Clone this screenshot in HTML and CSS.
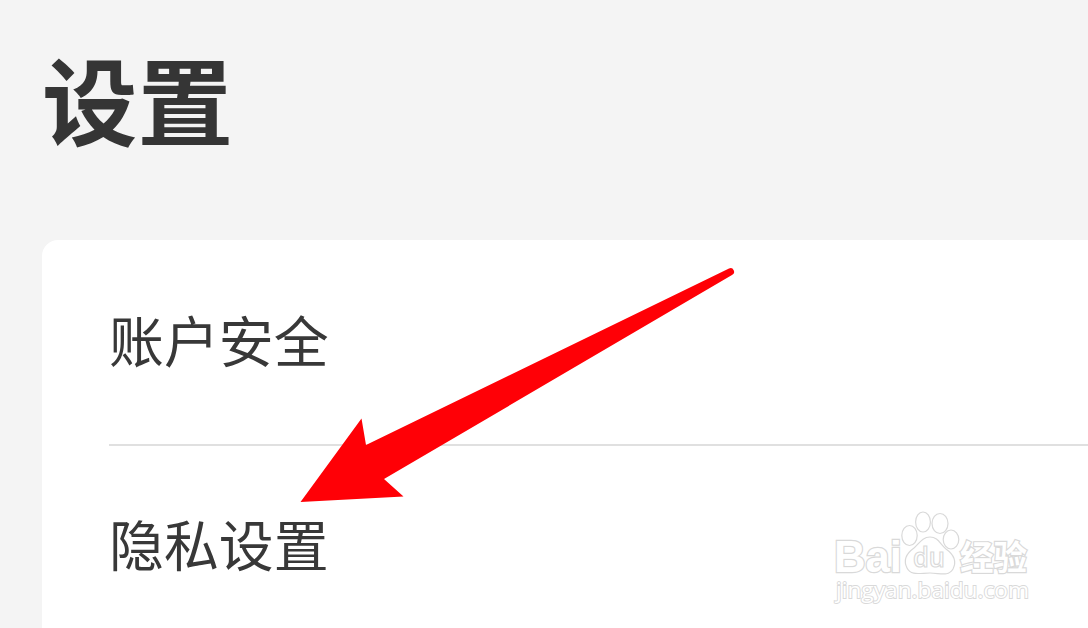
FILE: index.html
```
<!DOCTYPE html>
<html lang="zh-CN">
<head>
<meta charset="utf-8">
<title>设置</title>
<link rel="stylesheet" href="styles.css">
</head>
<body>
<main class="page">
  <h1 class="title">设置</h1>
  <section class="card">
    <div class="item">账户安全</div>
    <div class="item">隐私设置</div>
  </section>
  <svg class="arrow" viewBox="0 0 1088 628" aria-hidden="true">
    <path d="M300.500 502 361.500 418.500 366 445 729 268.600A3.500 3.500 0 0 1 732 275L384 479 403.500 496.500Z"/>
  </svg>
  <svg class="watermark" viewBox="820 500 230 120">
    <text class="brand" x="834" y="572" font-size="44" textLength="68" lengthAdjust="spacingAndGlyphs">Bai</text>
    <g class="paw">
      <ellipse cx="909.500" cy="535.500" rx="7.700" ry="10"/>
      <ellipse cx="923" cy="522" rx="7.400" ry="10"/>
      <ellipse cx="940" cy="523.500" rx="8" ry="10"/>
      <ellipse cx="951" cy="539.500" rx="7.800" ry="9.500"/>
      <path d="M930 537C922 537 919 544 914 548C907 553 903 560 907 568C911 576 920 573 930 573C940 573 948 577 953 569C957 561 953 554 946 549C940 544 938 537 930 537Z"/>
    </g>
    <text class="du" x="913" y="567" font-size="27" textLength="32" lengthAdjust="spacingAndGlyphs">du</text>
    <text class="cn" x="960" y="570" font-size="34" textLength="67" lengthAdjust="spacingAndGlyphs">经验</text>
    <text class="url" x="836" y="598" font-size="22" textLength="193" lengthAdjust="spacingAndGlyphs">jingyan.baidu.com</text>
  </svg>
</main>
</body>
</html>
```
FILE: styles.css
```
body {
  margin: 0;
  background: #f4f4f4;
  color: #383838;
  font-family: "Noto Sans CJK SC", sans-serif;
}
.page {
  position: relative;
  width: 1088px;
  height: 628px;
  overflow: hidden;
  box-sizing: border-box;
  padding: 50px 0 0 42px;
}
.title {
  margin: 0 0 94px;
  height: 96px;
  font-size: 95.500px;
  line-height: 96px;
  font-weight: 700;
  color: #353535;
}
.card {
  height: 400px;
  padding-left: 67px;
  background: #fff;
  border-top-left-radius: 16px;
}
.item {
  height: 204px;
  box-sizing: border-box;
  font-size: 54.900px;
  line-height: 197px;
}
.item + .item {
  border-top: 2px solid #e0e0e0;
  line-height: 193px;
}
.arrow {
  position: absolute;
  inset: 0;
  width: 1088px;
  height: 628px;
  fill: #ff0006;
}
.watermark {
  position: absolute;
  left: 820px;
  top: 500px;
  width: 230px;
  height: 120px;
  fill: #fff;
  stroke: #d9d9d9;
  stroke-width: 1.2;
}
.brand {
  font-family: "Liberation Sans", sans-serif;
  font-weight: 700;
}
.du {
  font-family: "Open Sans", sans-serif;
  font-weight: 600;
}
.cn {
  font-family: "Noto Sans CJK SC", sans-serif;
  font-weight: 700;
}
.url {
  font-family: "Open Sans", sans-serif;
  font-weight: 400;
  stroke-width: 1.8;
  paint-order: stroke;
}
.brand, .cn {
  stroke-width: 2.4;
  paint-order: stroke;
}
```
